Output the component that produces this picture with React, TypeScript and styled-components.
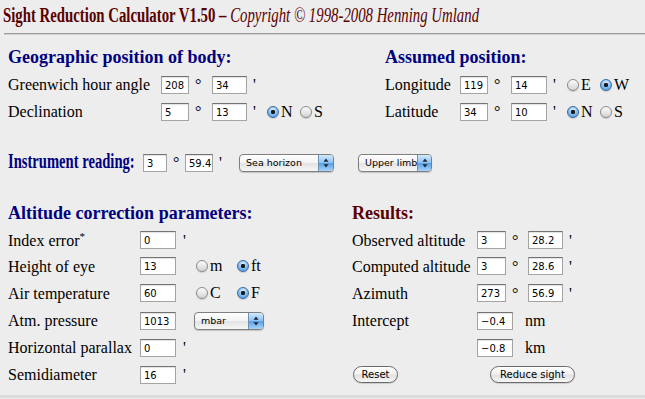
import styled, { createGlobalStyle } from "styled-components";

const GlobalStyle = createGlobalStyle`
  html, body {
    margin: 0;
    padding: 0;
    background: #ededed;
  }
  body {
    font-family: "Liberation Serif", "Times New Roman", serif;
    font-size: 16px;
    color: #000;
    overflow: hidden;
  }
`;

const Page = styled.div`
  width: 645px;
  height: 399px;
  padding-top: 3px;
  box-sizing: border-box;
  overflow: hidden;
`;

const Title = styled.div`
  padding-left: 4px;
  font-size: 20px;
  line-height: 24px;
  color: #5a0000;
  white-space: nowrap;
  transform: scaleX(0.74);
  transform-origin: left center;
`;

const TitleMain = styled.b``;

const TitleCopy = styled.i`
  font-weight: normal;
`;

const Rule = styled.div`
  margin: 6px 0 0 4px;
  border-top: 1px solid #9a9a9a;
  border-bottom: 1px solid #d2d2d2;
`;

const Section = styled.div<{ $cols: string; $top: number }>`
  display: grid;
  grid-template-columns: ${(p) => p.$cols};
  margin-top: ${(p) => p.$top}px;
  padding-left: 8px;
`;

const Column = styled.div`
  display: flex;
  flex-direction: column;
`;

const Heading = styled.div<{ $red?: boolean }>`
  font-size: 18px;
  font-weight: bold;
  line-height: 20px;
  height: 20px;
  margin-bottom: 4px;
  color: ${(p) => (p.$red ? "#5a0000" : "#00007f")};
  white-space: nowrap;
`;

const Row = styled.div<{ $h?: number }>`
  display: flex;
  align-items: center;
  height: ${(p) => p.$h ?? 27}px;
  white-space: nowrap;
`;

const Label = styled.span<{ $w: number }>`
  width: ${(p) => p.$w}px;
  flex: none;
  line-height: 27px;
`;

const InlineHeading = styled(Heading)`
  width: 135px;
  flex: none;
  font-size: 20px;
  margin: 0 0 3px;
  transform: scaleX(0.73);
  transform-origin: left center;
`;

const Star = styled.sup`
  font-size: 11px;
  vertical-align: 6px;
  line-height: 0;
`;

const Field = styled.input<{ $w: number }>`
  width: ${(p) => p.$w}px;
  height: 18px;
  flex: none;
  box-sizing: border-box;
  margin: 0;
  padding: 1px 0 0 3px;
  border: 1px solid #a4a4a4;
  border-top-color: #737373;
  background: #fff;
  box-shadow: inset 0 1px 1px rgba(0, 0, 0, 0.12);
  font: 10px "DejaVu Sans", sans-serif;
  color: #000;
  outline: none;
`;

const Unit = styled.span<{ $w: number; $pad?: number }>`
  width: ${(p) => p.$w}px;
  flex: none;
  box-sizing: border-box;
  padding-left: ${(p) => p.$pad ?? 6}px;
  line-height: 27px;
`;

const Options = styled.div<{ $ml?: number }>`
  display: flex;
  margin-left: ${(p) => p.$ml ?? 0}px;
`;

const Option = styled.label<{ $w: number }>`
  width: ${(p) => p.$w}px;
  display: flex;
  align-items: center;
  gap: 2px;
`;

const Radio = styled.input`
  appearance: none;
  width: 12px;
  height: 12px;
  margin: 0;
  border-radius: 50%;
  box-sizing: border-box;
  border: 1px solid #8b8b8b;
  background: linear-gradient(#fbfbfb, #e6e6e6 55%, #d2d2d2);
  box-shadow: 0 1px 1px rgba(0, 0, 0, 0.15);
  &:checked {
    border-color: #3c6a9e;
    background: radial-gradient(circle at 50% 50%, #1b1b1b 0 1.9px, transparent 2.5px),
      radial-gradient(circle at 50% 30%, #e2f1fe 0, #8cc4f5 45%, #3f8ddf 100%);
  }
`;

const Popup = styled.div<{ $w: number; $ml?: number }>`
  width: ${(p) => p.$w}px;
  height: 18px;
  margin-left: ${(p) => p.$ml ?? 0}px;
  flex: none;
  display: flex;
  box-sizing: border-box;
  border: 1px solid #7f7f7f;
  border-radius: 4px;
  overflow: hidden;
  background: linear-gradient(#ffffff, #f3f3f3 48%, #e3e3e3 52%, #f6f6f6);
  box-shadow: 0 1px 1px rgba(0, 0, 0, 0.18);
`;

const PopupText = styled.span`
  flex: 1;
  padding-left: 6px;
  font: 9.5px "DejaVu Sans", sans-serif;
  line-height: 16px;
`;

const PopupCap = styled.span`
  width: 14px;
  flex: none;
  display: flex;
  align-items: center;
  justify-content: center;
  border-left: 1px solid #6f8fb5;
  background: linear-gradient(#d2e9fd, #8ec3f2 48%, #5a9fe5 52%, #a7d4fb);
`;

const Button = styled.button<{ $w: number; $ml?: number }>`
  width: ${(p) => p.$w}px;
  height: 17px;
  margin: 0 0 0 ${(p) => p.$ml ?? 0}px;
  padding: 0;
  flex: none;
  border: 1px solid #6a6a6a;
  border-radius: 9px;
  background: linear-gradient(#ffffff, #f2f2f2 48%, #e0e0e0 52%, #f7f7f7);
  box-shadow: 0 1px 1px rgba(0, 0, 0, 0.15);
  font: 10px "DejaVu Sans", sans-serif;
  color: #000;
  line-height: 15px;
`;

const Footer = styled.div`
  height: 3px;
  margin-top: 7px;
  background: #dcdcdc;
`;

function Arrows() {
  return (
    <svg width="6" height="10" viewBox="0 0 6 10">
      <path d="M3 0.5 L5.5 3.8 H0.5 Z" fill="#1c2433" />
      <path d="M3 9.5 L5.5 6.2 H0.5 Z" fill="#1c2433" />
    </svg>
  );
}

function Select({ w, ml, value }: { w: number; ml?: number; value: string }) {
  return (
    <Popup $w={w} $ml={ml}>
      <PopupText>{value}</PopupText>
      <PopupCap>
        <Arrows />
      </PopupCap>
    </Popup>
  );
}

type Opt = { label: string; checked?: boolean };

function RadioGroup({ name, opts, w, ml }: { name: string; opts: Opt[]; w: number; ml?: number }) {
  return (
    <Options $ml={ml}>
      {opts.map((o) => (
        <Option key={o.label} $w={w}>
          <Radio type="radio" name={name} defaultChecked={o.checked} />
          {o.label}
        </Option>
      ))}
    </Options>
  );
}

export default function App() {
  return (
    <Page>
      <GlobalStyle />
      <Title>
        <TitleMain>Sight Reduction Calculator V1.50 –</TitleMain>{" "}
        <TitleCopy>Copyright © 1998-2008 Henning Umland</TitleCopy>
      </Title>
      <Rule />

      <Section $cols="377px 1fr" $top={12}>
        <Column>
          <Heading>Geographic position of body:</Heading>
          <Row>
            <Label $w={153}>Greenwich hour angle</Label>
            <Field $w={28} defaultValue="208" />
            <Unit $w={23}>°</Unit>
            <Field $w={35} defaultValue="34" />
            <Unit $w={20}>'</Unit>
          </Row>
          <Row>
            <Label $w={153}>Declination</Label>
            <Field $w={28} defaultValue="5" />
            <Unit $w={23}>°</Unit>
            <Field $w={35} defaultValue="13" />
            <Unit $w={20}>'</Unit>
            <RadioGroup name="dec" w={33} opts={[{ label: "N", checked: true }, { label: "S" }]} />
          </Row>
        </Column>
        <Column>
          <Heading>Assumed position:</Heading>
          <Row>
            <Label $w={75}>Longitude</Label>
            <Field $w={28} defaultValue="119" />
            <Unit $w={23}>°</Unit>
            <Field $w={36} defaultValue="14" />
            <Unit $w={20}>'</Unit>
            <RadioGroup name="lon" w={33} opts={[{ label: "E" }, { label: "W", checked: true }]} />
          </Row>
          <Row>
            <Label $w={75}>Latitude</Label>
            <Field $w={28} defaultValue="34" />
            <Unit $w={23}>°</Unit>
            <Field $w={36} defaultValue="10" />
            <Unit $w={20}>'</Unit>
            <RadioGroup name="lat" w={33} opts={[{ label: "N", checked: true }, { label: "S" }]} />
          </Row>
        </Column>
      </Section>

      <Section $cols="1fr" $top={24}>
        <Row>
          <InlineHeading>Instrument reading:</InlineHeading>
          <Field $w={24} defaultValue="3" />
          <Unit $w={18}>°</Unit>
          <Field $w={28} defaultValue="59.4" />
          <Unit $w={26}>'</Unit>
          <Select w={95} value="Sea horizon" />
          <Select w={74} ml={24} value="Upper limb" />
        </Row>
      </Section>

      <Section $cols="344px 1fr" $top={27}>
        <Column>
          <Heading>Altitude correction parameters:</Heading>
          <Row $h={26}>
            <Label $w={132}>
              Index error<Star>*</Star>
            </Label>
            <Field $w={36} defaultValue="0" />
            <Unit $w={20} $pad={7}>'</Unit>
          </Row>
          <Row $h={26}>
            <Label $w={132}>Height of eye</Label>
            <Field $w={36} defaultValue="13" />
            <RadioGroup name="hoe" ml={20} w={41} opts={[{ label: "m" }, { label: "ft", checked: true }]} />
          </Row>
          <Row $h={28}>
            <Label $w={132}>Air temperature</Label>
            <Field $w={36} defaultValue="60" />
            <RadioGroup name="temp" ml={20} w={41} opts={[{ label: "C" }, { label: "F", checked: true }]} />
          </Row>
          <Row>
            <Label $w={132}>Atm. pressure</Label>
            <Field $w={36} defaultValue="1013" />
            <Select w={70} ml={18} value="mbar" />
          </Row>
          <Row>
            <Label $w={132}>Horizontal parallax</Label>
            <Field $w={36} defaultValue="0" />
            <Unit $w={20} $pad={7}>'</Unit>
          </Row>
          <Row>
            <Label $w={132}>Semidiameter</Label>
            <Field $w={36} defaultValue="16" />
            <Unit $w={20} $pad={7}>'</Unit>
          </Row>
        </Column>
        <Column>
          <Heading $red>Results:</Heading>
          <Row $h={26}>
            <Label $w={125}>Observed altitude</Label>
            <Field $w={29} defaultValue="3" />
            <Unit $w={22}>°</Unit>
            <Field $w={35} defaultValue="28.2" />
            <Unit $w={20}>'</Unit>
          </Row>
          <Row $h={26}>
            <Label $w={125}>Computed altitude</Label>
            <Field $w={29} defaultValue="3" />
            <Unit $w={22}>°</Unit>
            <Field $w={35} defaultValue="28.6" />
            <Unit $w={20}>'</Unit>
          </Row>
          <Row $h={28}>
            <Label $w={125}>Azimuth</Label>
            <Field $w={29} defaultValue="273" />
            <Unit $w={22}>°</Unit>
            <Field $w={35} defaultValue="56.9" />
            <Unit $w={20}>'</Unit>
          </Row>
          <Row>
            <Label $w={125}>Intercept</Label>
            <Field $w={36} defaultValue="−0.4" />
            <Unit $w={40} $pad={12}>nm</Unit>
          </Row>
          <Row>
            <Label $w={125}></Label>
            <Field $w={36} defaultValue="−0.8" />
            <Unit $w={40} $pad={12}>km</Unit>
          </Row>
          <Row>
            <Button $w={45} $ml={1}>Reset</Button>
            <Button $w={85} $ml={92}>Reduce sight</Button>
          </Row>
        </Column>
      </Section>
      <Footer />
    </Page>
  );
}
